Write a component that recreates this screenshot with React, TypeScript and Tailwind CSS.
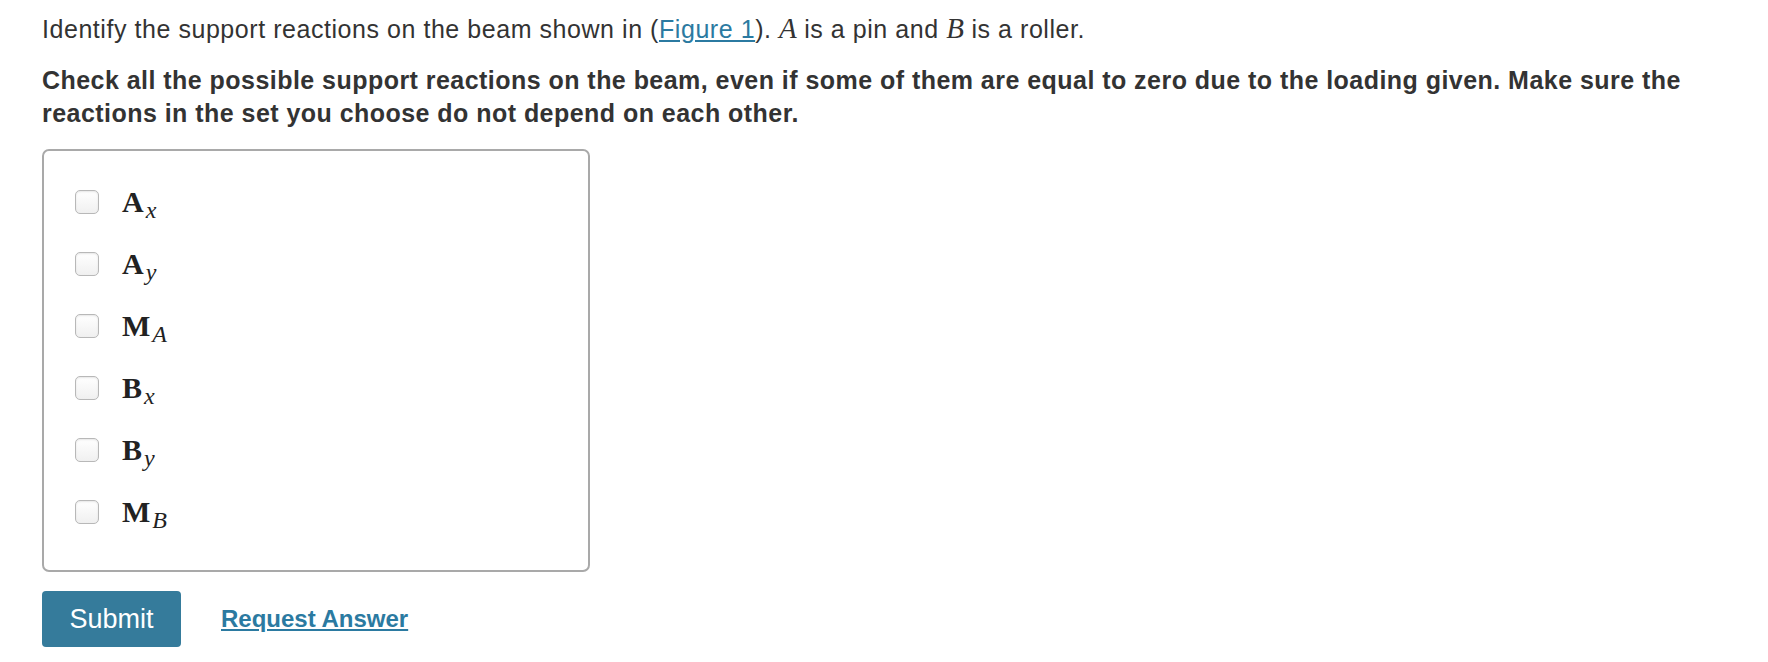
// Mastering-style multi-select question: prompt, checkbox list, submit row.

const sans = "font-['Liberation_Sans',Arial,sans-serif]";
const serif = "font-['Liberation_Serif','Times_New_Roman',serif]";

interface Option {
  base: string;
  sub: string;
}

const options: Option[] = [
  { base: "A", sub: "x" },
  { base: "A", sub: "y" },
  { base: "M", sub: "A" },
  { base: "B", sub: "x" },
  { base: "B", sub: "y" },
  { base: "M", sub: "B" },
];

function MathVar({ children }: { children: string }) {
  return <span className={`${serif} text-[29px] italic tracking-normal`}>{children}</span>;
}

function Checkbox() {
  return (
    <span className="block h-[24px] w-[24px] shrink-0 rounded-[5px] border border-[#b8b8b8] bg-gradient-to-b from-white to-[#f0f0f0] shadow-[inset_0_1px_2px_rgba(0,0,0,0.1)]" />
  );
}

export default function App() {
  return (
    <div className={`${sans} min-h-screen bg-white pl-[42px] pt-[12px] text-[#333]`}>
      <p className="text-[25px] leading-[33px] tracking-[0.55px]">
        Identify the support reactions on the beam shown in (
        <a href="#" className="text-[#2b7aa1] underline underline-offset-2">
          Figure 1
        </a>
        ). <MathVar>A</MathVar> is a pin and <MathVar>B</MathVar> is a roller.
      </p>

      <p className="mt-[18px] max-w-[1680px] text-[25px] font-bold leading-[33px] tracking-[0.46px]">
        Check all the possible support reactions on the beam, even if some of them are equal to
        zero due to the loading given. Make sure the reactions in the set you choose do not
        depend on each other.
      </p>

      <div className="mt-[19px] w-[548px] rounded-[7px] border-2 border-[#a9a9a9] pb-[27px] pl-[31px] pt-[20px]">
        {options.map((o, i) => (
          <label key={i} className="flex h-[62px] cursor-pointer items-center gap-[23px]">
            <Checkbox />
            <span className={`${serif} leading-none text-[#222]`}>
              <b className="text-[30px] tracking-[1px]">{o.base}</b>
              <i className="relative top-[6px] ml-[1px] text-[24px]">{o.sub}</i>
            </span>
          </label>
        ))}
      </div>

      <div className="mt-[19px] flex items-center gap-[40px]">
        <button className="h-[56px] w-[139px] rounded-[4px] bg-[#357b9b] text-[27px] text-white">
          Submit
        </button>
        <a href="#" className="text-[24px] font-bold text-[#2b7aa1] underline underline-offset-2">
          Request Answer
        </a>
      </div>
    </div>
  );
}
